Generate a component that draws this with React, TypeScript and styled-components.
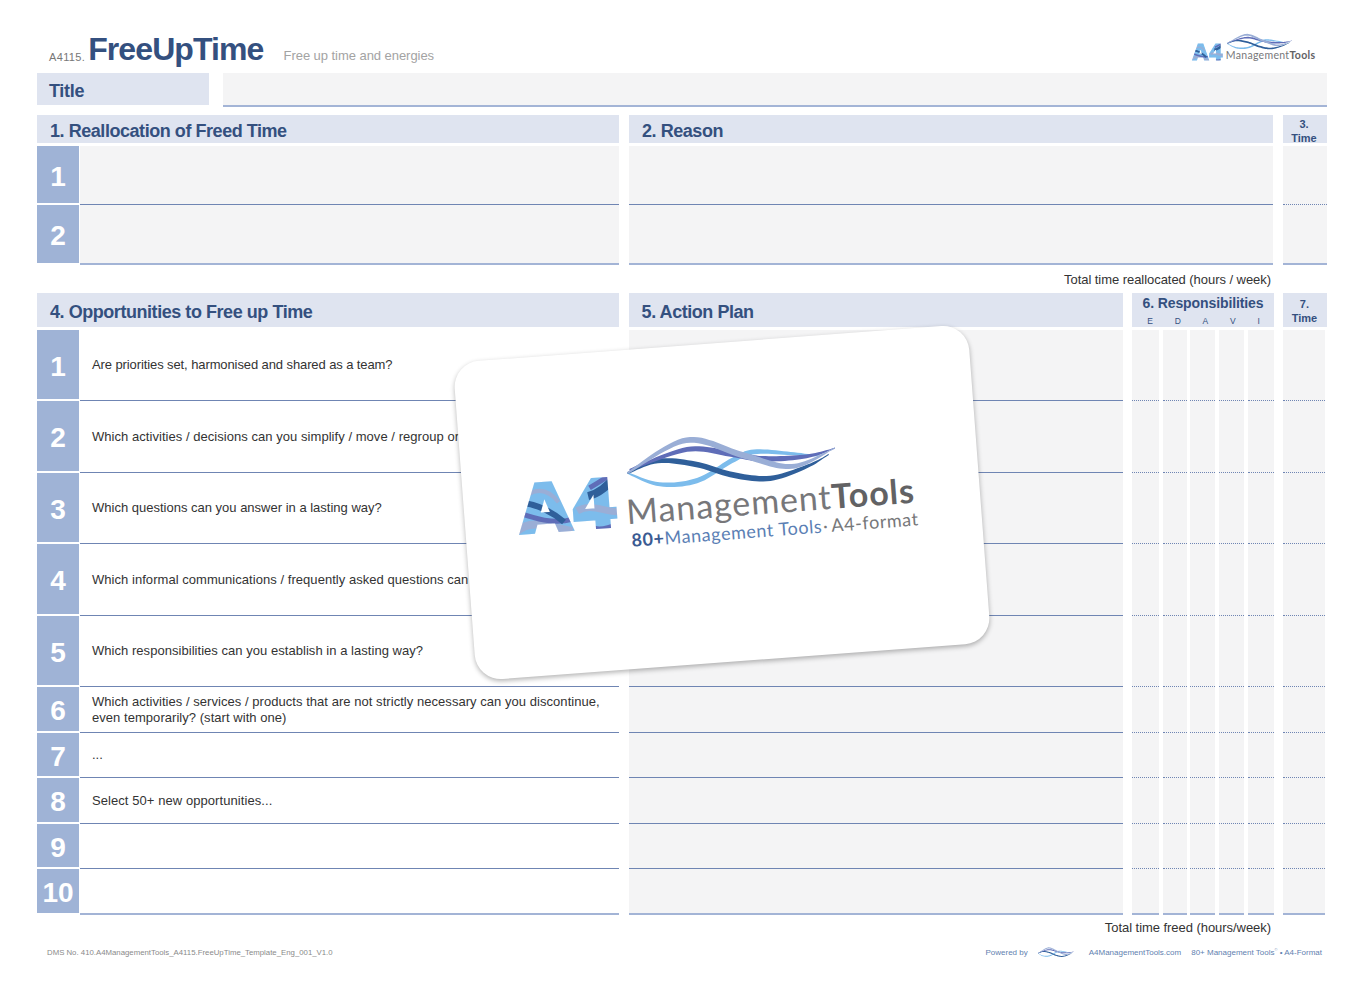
import styled, { createGlobalStyle } from "styled-components";

const INK = "#34507f";
const HEAD = "#dfe4f0";
const CELL = "#f4f4f5";
const NUMBER = "#9fb3d6";
const LINE = "#6f85b3";
const LAST_LINE = "#a3b4d6";

type Point = [number, number];

// tapered ribbon through the given points, used for the logo wave
function ribbon(points: Point[], width: number) {
  const sample = (t: number): Point => {
    const s = t * (points.length - 1);
    const i = Math.min(Math.floor(s), points.length - 2);
    const f = s - i;
    const p0 = points[Math.max(i - 1, 0)];
    const p1 = points[i];
    const p2 = points[i + 1];
    const p3 = points[Math.min(i + 2, points.length - 1)];
    const calc = (a: number, b: number, c: number, d: number) =>
      0.5 *
      (2 * b +
        (c - a) * f +
        (2 * a - 5 * b + 4 * c - d) * f * f +
        (3 * b - a - 3 * c + d) * f * f * f);
    return [calc(p0[0], p1[0], p2[0], p3[0]), calc(p0[1], p1[1], p2[1], p3[1])];
  };
  const top: string[] = [];
  const bottom: string[] = [];
  for (let n = 0; n <= 60; n++) {
    const t = n / 60;
    const [x, y] = sample(t);
    const half = (width / 2) * Math.pow(Math.sin(Math.PI * Math.min(t + 0.04, 0.98)), 0.6);
    top.push(`${x.toFixed(1)} ${(y - half).toFixed(1)}`);
    bottom.unshift(`${x.toFixed(1)} ${(y + half).toFixed(1)}`);
  }
  return `M${top.join("L")}L${bottom.join("L")}Z`;
}

const STRANDS: { color: string; width: number; points: Point[] }[] = [
  {
    color: "#7cbcec",
    width: 5.5,
    points: [[0, 33], [28, 46.7], [62, 45.8], [95, 28.3], [115, 21.4], [148, 25.8], [175, 30.8]],
  },
  {
    color: "#2f5f9a",
    width: 6,
    points: [[0, 33], [28, 23.3], [62, 29.5], [95, 43], [128, 49], [162, 39.8], [182, 29.6]],
  },
  {
    color: "#5f6db8",
    width: 6,
    points: [[2, 30], [55, 14], [95, 22], [122, 29], [162, 29.8], [188, 23.7]],
  },
  {
    color: "#9aaed6",
    width: 6.5,
    points: [[0, 33], [55, 4.7], [105, 24], [148, 38.8], [188, 23.7]],
  },
];

function Wave() {
  return (
    <>
      {STRANDS.map((strand) => (
        <path key={strand.color} d={ribbon(strand.points, strand.width)} fill={strand.color} />
      ))}
    </>
  );
}

function Logo({ id, tagline, className }: { id: string; tagline?: boolean; className?: string }) {
  return (
    <svg className={className} viewBox="0 0 400 116" overflow="visible" aria-label="A4 Management Tools">
      <defs>
        <mask id={id} maskUnits="userSpaceOnUse" x="-6" y="20" width="125" height="80">
          <text
            x="2"
            y="86"
            fontFamily="'DejaVu Sans'"
            fontWeight="700"
            fontSize="66"
            fill="#fff"
            stroke="#fff"
            strokeWidth="3"
            textLength="99"
            lengthAdjust="spacingAndGlyphs"
          >
            A4
          </text>
        </mask>
      </defs>
      <g mask={`url(#${id})`}>
        <rect x="-4" y="30" width="116" height="64" fill="#7cbcec" />
        <g fill="none">
          <path d="M-2 84 C14 72 30 82 54 88" stroke="#9aaed6" strokeWidth="8" />
          <path d="M2 66 C16 72 36 80 54 76" stroke="#5f6db8" strokeWidth="5" />
          <path d="M6 56 C20 58 36 68 46 78" stroke="#2f5f9a" strokeWidth="6" />
          <path d="M12 48 C24 42 34 46 42 58" stroke="#9aaed6" strokeWidth="4" />
          <path d="M60 68 C76 60 90 74 106 72" stroke="#9aaed6" strokeWidth="7" />
          <path d="M72 54 C84 52 92 46 100 36" stroke="#2f5f9a" strokeWidth="8" />
          <path d="M74 46 C82 42 90 38 100 32" stroke="#5f6db8" strokeWidth="5" />
          <path d="M76 86 C84 90 92 84 98 86" stroke="#5f6db8" strokeWidth="4" />
        </g>
      </g>
      <g transform="translate(113 1) scale(1.11 1)">
        <Wave />
      </g>
      <text x="109" y="85" fontFamily="Lato, sans-serif" fontSize="34" fill="#77777a" letterSpacing="0.95">
        Management
        <tspan fontWeight="700" fill="#626264">Tools</tspan>
      </text>
      {tagline && (
        <text x="112" y="108" fontFamily="Lato, sans-serif" fontSize="18" fill="#5b7fb5" letterSpacing="0.58">
          <tspan fontWeight="700" fill="#3b5b92">80+</tspan>
          Management Tools
          <tspan fill="#77787a" dx="1">·</tspan>
          <tspan fill="#77787a" dx="3">A4-format</tspan>
        </text>
      )}
    </svg>
  );
}

const GlobalStyle = createGlobalStyle`
  body {
    margin: 0;
    background: #fff;
    font-family: "Liberation Sans", Arial, sans-serif;
    color: #333;
  }
`;

const Page = styled.div`
  position: relative;
  width: 1361px;
  height: 984px;
  padding: 0 34px 0 37px;
  box-sizing: border-box;
  overflow: hidden;
`;

const Header = styled.header`
  display: flex;
  align-items: flex-start;
  height: 73px;
`;

const DocCode = styled.span`
  margin: 51px 3px 0 12px;
  font-size: 11px;
  line-height: 13px;
  letter-spacing: 0.35px;
  color: #777;
`;

const DocTitle = styled.h1`
  margin: 31px 0 0;
  font-size: 32px;
  line-height: 36px;
  font-weight: 700;
  letter-spacing: -0.9px;
  color: ${INK};
`;

const DocSubtitle = styled.span`
  margin: 48px 0 0 20px;
  font-size: 13px;
  line-height: 15px;
  letter-spacing: -0.05px;
  color: #a3a3a3;
`;

const HeaderLogo = styled(Logo)`
  width: 124px;
  height: 36px;
  margin: 33px 11px 0 auto;
`;

const TitleRow = styled.div`
  display: grid;
  grid-template-columns: 172px 1fr;
  column-gap: 14px;
  height: 34px;
`;

const TitleLabel = styled.div`
  height: 32px;
  padding-left: 12px;
  background: ${HEAD};
  color: ${INK};
  font-size: 18px;
  font-weight: 700;
  line-height: 37px;
  letter-spacing: -0.3px;
`;

const TitleField = styled.div`
  background: ${CELL};
  border-bottom: 2px solid ${LAST_LINE};
`;

const TopColumns = styled.div<{ $height: number }>`
  display: grid;
  grid-template-columns: 582px 644px 44px;
  grid-template-rows: minmax(0, 1fr);
  column-gap: 10px;
  height: ${(p) => p.$height}px;
`;

const LowerColumns = styled.div<{ $height: number }>`
  display: grid;
  grid-template-columns: 582px 494px 141.6px 42px;
  grid-template-rows: minmax(0, 1fr);
  column-gap: 9.6px;
  height: ${(p) => p.$height}px;
`;

const ColumnHead = styled.div`
  display: flex;
  align-items: center;
  padding: 4px 0 0 13px;
  box-sizing: border-box;
  background: ${HEAD};
  color: ${INK};
  font-size: 18px;
  font-weight: 700;
  letter-spacing: -0.45px;
`;

const NarrowHead = styled.div<{ $top: number }>`
  display: flex;
  flex-direction: column;
  align-items: center;
  width: 44px;
  padding: ${(p) => p.$top}px 2px 0 0;
  box-sizing: border-box;
  overflow: hidden;
  background: ${HEAD};
  color: ${INK};
  font-size: 11px;
  font-weight: 700;
  line-height: 14px;
`;

const ResponsibilityHead = styled.div`
  background: ${HEAD};
  color: ${INK};
  text-align: center;
`;

const ResponsibilityTitle = styled.div`
  padding-top: 2px;
  font-size: 14px;
  font-weight: 700;
  line-height: 17px;
  letter-spacing: -0.1px;
`;

const LetterRow = styled.div`
  display: flex;
  justify-content: space-between;
  margin-top: 4px;
  padding: 0 14px 0 15px;
  font-size: 8.5px;
  line-height: 10px;
`;

const Gap = styled.div<{ $height: number }>`
  height: ${(p) => p.$height}px;
`;

const QuestionCell = styled.div`
  display: grid;
  grid-template-columns: 42px 1fr;
  column-gap: 1px;
`;

const NumberBox = styled.div`
  display: flex;
  align-items: center;
  justify-content: center;
  margin-bottom: 2px;
  padding-top: 4px;
  box-sizing: border-box;
  background: ${NUMBER};
  color: #fff;
  font-size: 28px;
  font-weight: 700;
`;

const LinedBox = styled.div<{ $grey?: boolean; $last?: boolean; $dotted?: boolean }>`
  display: flex;
  align-items: center;
  min-width: 0;
  background: ${(p) => (p.$grey ? CELL : "#fff")};
  border-bottom: ${(p) =>
    p.$last
      ? `2px solid ${LAST_LINE}`
      : p.$dotted
        ? `1px dotted ${LINE}`
        : `1px solid ${LINE}`};
`;

const Question = styled.p<{ $track: number }>`
  margin: 0;
  padding-left: 12px;
  font-size: 13px;
  line-height: 16px;
  letter-spacing: ${(p) => p.$track}px;
  color: #333;
`;

const ResponsibilityCells = styled.div`
  display: grid;
  grid-template-columns: 27px 24px 25px 25px 26px;
  column-gap: 3.65px;
`;

const TotalLine = styled.div<{ $height: number; $line: number }>`
  height: ${(p) => p.$height}px;
  padding-right: 56px;
  text-align: right;
  font-size: 13px;
  line-height: ${(p) => p.$line}px;
  letter-spacing: -0.05px;
  color: #333;
`;

const FooterBar = styled.footer`
  display: flex;
  align-items: center;
  height: 14px;
  margin-top: 2px;
  padding: 0 5px 0 10px;
  font-size: 7.8px;
  color: #8a8a8a;
`;

const FooterLinks = styled.div`
  display: flex;
  align-items: center;
  margin-left: auto;
  font-size: 8px;
  color: #5f7fb0;
`;

const FooterWave = styled.svg`
  width: 36px;
  height: 10px;
  margin: 0 15px 0 10px;
`;

const FooterLink = styled.span`
  margin-right: 10px;
`;

const Sup = styled.sup`
  font-size: 4px;
  line-height: 0;
`;

const PromoCard = styled.div`
  position: absolute;
  left: 464px;
  top: 343px;
  display: flex;
  align-items: center;
  justify-content: center;
  width: 516px;
  height: 319px;
  padding: 0 10px 25px 0;
  box-sizing: border-box;
  background: #fff;
  border-radius: 26px;
  box-shadow: 0 2px 5px rgba(0, 0, 0, 0.3);
  transform: rotate(-4.3deg);
`;

const PromoLogo = styled(Logo)`
  flex: none;
  width: 400px;
  height: 116px;
`;

const OPPORTUNITIES = [
  { height: 71, track: -0.1, text: "Are priorities set, harmonised and shared as a team?" },
  { height: 72, track: 0.045, text: "Which activities / decisions can you simplify / move / regroup or automate?" },
  { height: 71, track: 0, text: "Which questions can you answer in a lasting way?" },
  { height: 72, track: 0.045, text: "Which informal communications / frequently asked questions can you formalise?" },
  { height: 71, track: 0.04, text: "Which responsibilities can you establish in a lasting way?" },
  {
    height: 46,
    track: 0.045,
    text: "Which activities / services / products that are not strictly necessary can you discontinue, even temporarily? (start with one)",
  },
  { height: 45, track: 0, text: "..." },
  { height: 46, track: 0.07, text: "Select 50+ new opportunities..." },
  { height: 45, track: 0, text: "" },
  { height: 46, track: 0, text: "" },
];

const LETTERS = ["E", "D", "A", "V", "I"];

function App() {
  return (
    <Page>
      <GlobalStyle />

      <Header>
        <DocCode>A4115.</DocCode>
        <DocTitle>FreeUpTime</DocTitle>
        <DocSubtitle>Free up time and energies</DocSubtitle>
        <HeaderLogo id="header-a4" />
      </Header>

      <TitleRow>
        <TitleLabel>Title</TitleLabel>
        <TitleField />
      </TitleRow>

      <Gap $height={8} />

      <TopColumns $height={28}>
        <ColumnHead>1. Reallocation of Freed Time</ColumnHead>
        <ColumnHead>2. Reason</ColumnHead>
        <NarrowHead $top={2}>
          <span>3.</span>
          <span>Time</span>
        </NarrowHead>
      </TopColumns>

      <Gap $height={3} />

      {[59, 60].map((height, index) => {
        const last = index === 1;
        return (
          <TopColumns $height={height} key={height}>
            <QuestionCell>
              <NumberBox>{index + 1}</NumberBox>
              <LinedBox $grey $last={last} />
            </QuestionCell>
            <LinedBox $grey $last={last} />
            <LinedBox $grey $last={last} $dotted={!last} />
          </TopColumns>
        );
      })}

      <TotalLine $height={28} $line={30}>
        Total time reallocated (hours / week)
      </TotalLine>

      <LowerColumns $height={34}>
        <ColumnHead>4. Opportunities to Free up Time</ColumnHead>
        <ColumnHead>5. Action Plan</ColumnHead>
        <ResponsibilityHead>
          <ResponsibilityTitle>6. Responsibilities</ResponsibilityTitle>
          <LetterRow>
            {LETTERS.map((letter) => (
              <span key={letter}>{letter}</span>
            ))}
          </LetterRow>
        </ResponsibilityHead>
        <NarrowHead $top={4}>
          <span>7.</span>
          <span>Time</span>
        </NarrowHead>
      </LowerColumns>

      <Gap $height={3} />

      {OPPORTUNITIES.map((row, index) => {
        const last = index === OPPORTUNITIES.length - 1;
        return (
          <LowerColumns $height={row.height} key={index}>
            <QuestionCell>
              <NumberBox>{index + 1}</NumberBox>
              <LinedBox $last={last}>
                {row.text && <Question $track={row.track}>{row.text}</Question>}
              </LinedBox>
            </QuestionCell>
            <LinedBox $grey $last={last} />
            <ResponsibilityCells>
              {LETTERS.map((letter) => (
                <LinedBox key={letter} $grey $last={last} $dotted={!last} />
              ))}
            </ResponsibilityCells>
            <LinedBox $grey $last={last} $dotted={!last} />
          </LowerColumns>
        );
      })}

      <TotalLine $height={28} $line={25}>
        Total time freed (hours/week)
      </TotalLine>

      <FooterBar>
        <span>DMS No. 410.A4ManagementTools_A4115.FreeUpTime_Template_Eng_001_V1.0</span>
        <FooterLinks>
          <span>Powered by</span>
          <FooterWave viewBox="0 0 190 52" preserveAspectRatio="none">
            <Wave />
          </FooterWave>
          <FooterLink>A4ManagementTools.com</FooterLink>
          <span>
            80+ Management Tools<Sup>©</Sup> • A4-Format
          </span>
        </FooterLinks>
      </FooterBar>

      <PromoCard>
        <PromoLogo id="promo-a4" tagline />
      </PromoCard>
    </Page>
  );
}

export default App;
